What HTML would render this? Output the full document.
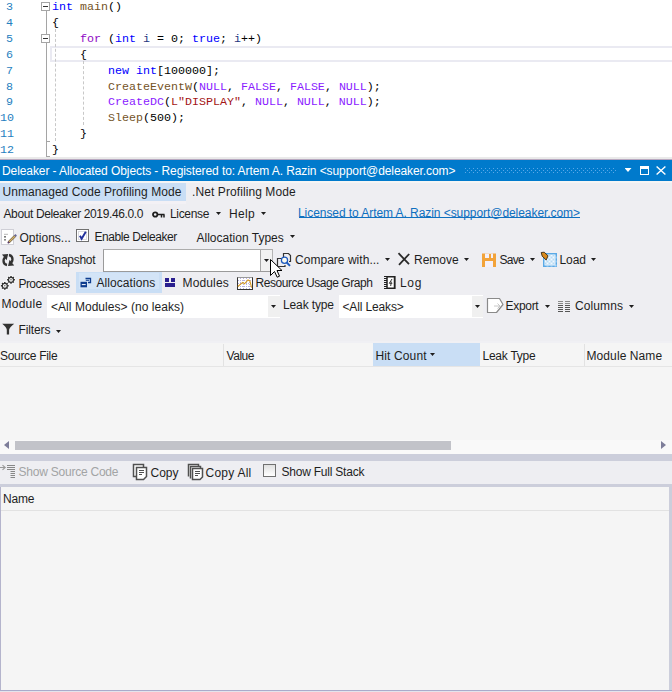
<!DOCTYPE html>
<html><head><meta charset="utf-8">
<style>
html,body{margin:0;padding:0;}
body{width:672px;height:692px;position:relative;overflow:hidden;background:#EEEEF2;font-family:"Liberation Sans",sans-serif;font-size:12px;color:#1E1E1E;}
.a{position:absolute;}
svg.a{overflow:visible;}
.t{position:absolute;white-space:pre;line-height:16px;height:16px;}
.code{position:absolute;left:0;top:0;width:672px;height:158px;background:#fff;overflow:hidden;}
.ln{position:absolute;left:0;width:13px;text-align:right;font-family:"Liberation Mono",monospace;font-size:11.67px;color:#2680C0;line-height:16px;white-space:pre;}
.cl{position:absolute;left:52px;font-family:"Liberation Mono",monospace;font-size:11.67px;letter-spacing:0px;line-height:16px;white-space:pre;color:#000;}
.kw{color:#0000FF}.fn{color:#74531F}.mc{color:#8A1BFF}.st{color:#A31515}.lv{color:#1F377F}.ct{color:#8F08C4}
.arr{position:absolute;width:5px;height:3px;background:#1E1E1E;clip-path:polygon(0 0,100% 0,50% 100%);}
</style></head><body>

<!-- code editor -->
<div class="code">
  <div class="a" style="left:50px;top:46px;width:630px;height:12px;border:2px solid #EAEAF2;"></div>
  <div class="ln" style="top:-1px">3</div>
  <div class="ln" style="top:15px">4</div>
  <div class="ln" style="top:31px">5</div>
  <div class="ln" style="top:47px">6</div>
  <div class="ln" style="top:63px">7</div>
  <div class="ln" style="top:79px">8</div>
  <div class="ln" style="top:94px">9</div>
  <div class="ln" style="top:110px">10</div>
  <div class="ln" style="top:126px">11</div>
  <div class="ln" style="top:142px">12</div>
  <!-- fold boxes -->
  <div class="a" style="left:41px;top:2px;width:7px;height:7px;border:1px solid #A5A5A5;background:#fff;"><div class="a" style="left:1px;top:3px;width:5px;height:1px;background:#333;"></div></div>
  <div class="a" style="left:41px;top:34px;width:7px;height:7px;border:1px solid #A5A5A5;background:#fff;"><div class="a" style="left:1px;top:3px;width:5px;height:1px;background:#333;"></div></div>
  <div class="a" style="left:46px;top:11px;width:1px;height:23px;background:#A5A5A5;"></div>
  <div class="a" style="left:46px;top:43px;width:1px;height:114px;background:#A5A5A5;"></div>
  <div class="a" style="left:46px;top:141px;width:4px;height:1px;background:#A5A5A5;"></div>
  <div class="a" style="left:46px;top:156px;width:4px;height:1px;background:#A5A5A5;"></div>
  <!-- indent guides -->
  <div class="a" style="left:55px;top:29px;width:0;height:112px;border-left:1px dashed #C8C8C8;"></div>
  <div class="a" style="left:83px;top:61px;width:0;height:64px;border-left:1px dashed #C8C8C8;"></div>

  <div class="cl" style="top:-1px"><span class="kw">int</span> <span class="fn">main</span>()</div>
  <div class="cl" style="top:15px">{</div>
  <div class="cl" style="top:31px">    <span class="ct">for</span> (<span class="kw">int</span> <span class="lv">i</span> = 0; <span class="kw">true</span>; <span class="lv">i</span>++)</div>
  <div class="cl" style="top:47px">    {</div>
  <div class="cl" style="top:63px">        <span class="kw">new</span> <span class="kw">int</span>[100000];</div>
  <div class="cl" style="top:79px">        <span class="fn">CreateEventW</span>(<span class="mc">NULL</span>, <span class="mc">FALSE</span>, <span class="mc">FALSE</span>, <span class="mc">NULL</span>);</div>
  <div class="cl" style="top:94px">        <span class="mc">CreateDC</span>(<span class="st">L"DISPLAY"</span>, <span class="mc">NULL</span>, <span class="mc">NULL</span>, <span class="mc">NULL</span>);</div>
  <div class="cl" style="top:110px">        <span class="fn">Sleep</span>(500);</div>
  <div class="cl" style="top:126px">    }</div>
  <div class="cl" style="top:142px">}</div>
</div>
<div class="a" style="left:0;top:157px;width:672px;height:2px;background:#EAEAEA;"></div>
<div class="a" style="left:0;top:159px;width:672px;height:1px;background:#B8A8C0;"></div>

<!-- title bar -->
<div class="a" style="left:0;top:160px;width:672px;height:21px;background:#007ACC;"></div>
<svg class="a" style="left:465px;top:168px" width="151" height="5"><defs><pattern id="gp" width="4" height="4" patternUnits="userSpaceOnUse"><rect x="0" y="0" width="1" height="1" fill="#5AA8E8"/><rect x="2" y="2" width="1" height="1" fill="#5AA8E8"/></pattern></defs><rect width="151" height="5" fill="url(#gp)"/></svg>
<div class="a" style="left:624.5px;top:168px;width:7px;height:4px;background:#fff;clip-path:polygon(0 0,100% 0,50% 100%);"></div>
<div class="a" style="left:640px;top:166px;width:7px;height:6px;border:1px solid #fff;border-top-width:3px;height:5px;"></div>
<svg class="a" style="left:656px;top:166px" width="10" height="10"><path d="M0.6 0.6L9.4 8.6M9.4 0.6L0.6 8.6" stroke="#fff" stroke-width="1.4"/></svg>

<div class="a" style="left:0;top:181px;width:672px;height:2px;background:#F5F5F5;"></div>
<!-- mode tabs -->
<div class="a" style="left:0;top:183px;width:186px;height:18px;background:#C9DEF5;"></div>
<div class="a" style="left:0;top:201px;width:186px;height:3px;background:#F3F1F5;"></div>

<!-- about row -->
<svg class="a" style="left:152px;top:210.5px" width="14" height="8"><circle cx="3.2" cy="3.5" r="2.2" fill="none" stroke="#1E1E1E" stroke-width="1.8"/><path d="M5.3 3.5H12.5M9.5 3.5V6.5M12 3.5V6.5" stroke="#1E1E1E" stroke-width="1.5"/></svg>
<div class="arr" style="left:216px;top:212px"></div>
<div class="arr" style="left:261px;top:212px"></div>
<div class="a" style="left:299px;top:217px;width:281px;height:1px;background:#0E70C0;"></div>

<!-- options row -->
<svg class="a" style="left:1px;top:229px" width="16" height="16"><rect x="0.5" y="0.5" width="12" height="15" fill="#fff" stroke="#CFCFD6"/><path d="M3 5.3H7" stroke="#B8B8B8" stroke-width="1"/><rect x="3" y="7" width="2" height="1.6" fill="#7A7A7A"/><rect x="3" y="10" width="2" height="1.6" fill="#8A8A8A"/><path d="M7.6 13.4L14.4 6.6" stroke="#7C6A50" stroke-width="2.6"/><path d="M7.8 13.2L14.2 6.8" stroke="#D8B868" stroke-width="1.2"/><path d="M6.8 14.2L8.2 12.8" stroke="#5A3A6A" stroke-width="1.6"/><path d="M13.8 7.2L15.2 5.8" stroke="#6A6A9A" stroke-width="2"/></svg>
<div class="a" style="left:76px;top:229px;width:11px;height:11px;border:1px solid #707070;background:#fff;"></div>
<svg class="a" style="left:76px;top:229px" width="13" height="13"><rect x="2.5" y="2.5" width="8" height="8" fill="none" stroke="#DADAE0" stroke-width="1"/><path d="M3.9 6.8L5.6 9.8L9.8 2.8" fill="none" stroke="#21309C" stroke-width="1.9"/></svg>
<div class="arr" style="left:290px;top:235px"></div>

<!-- snapshot row -->
<svg class="a" style="left:1px;top:253px" width="15" height="14"><path d="M5.8 3.6A4.3 4.3 0 0 0 6 12" fill="none" stroke="#333" stroke-width="2.3"/><path d="M1 1.6L7.2 1L5.6 7.2Z" fill="#333"/><path d="M8.2 10.4A4.3 4.3 0 0 0 8 2" fill="none" stroke="#333" stroke-width="2.3"/><path d="M13.2 12.4L7 13L8.6 6.8Z" fill="#333"/></svg>
<div class="a" style="left:103px;top:249px;width:168px;height:21px;border:1px solid #9A9A9A;border-top-color:#ACACAC;border-right-color:#B4B4B4;background:#fff;"></div>
<div class="a" style="left:260px;top:250px;width:11px;height:21px;background:#F2F2F2;border-left:1px solid #A8A8A8;"></div>
<div class="arr" style="left:264px;top:259px"></div>
<svg class="a" style="left:276px;top:252px" width="16" height="16"><path d="M7.5 5V1.5H12.5L14.5 3.5V9.5H13" fill="none" stroke="#333" stroke-width="1.2"/><path d="M6 6.5H1.5V14.5H9V13" fill="none" stroke="#333" stroke-width="1.2"/><circle cx="8.5" cy="8.3" r="3.1" fill="#FAFAF0" stroke="#1E5BBF" stroke-width="1.25"/><path d="M10.7 10.5L14 13.8" stroke="#1E5BBF" stroke-width="1.9"/></svg>
<svg class="a" style="left:269px;top:258px" width="14" height="20"><path d="M1.5 1.5V17.5L5.5 13.5L8.2 19.2L10.5 18.2L8 12.5H13Z" fill="#fff" stroke="#000" stroke-width="1" stroke-linejoin="miter"/></svg>
<div class="arr" style="left:385px;top:258px"></div>
<svg class="a" style="left:397px;top:252px" width="14" height="14"><path d="M1.5 1.2L12 12.2M12.2 2L2 12.8" stroke="#2A2A2A" stroke-width="1.8"/></svg>
<div class="arr" style="left:464px;top:258px"></div>
<svg class="a" style="left:481px;top:253px" width="16" height="15"><path d="M1 0.5H15V14H1Z" fill="#F2A33A"/><rect x="4" y="8" width="8" height="6" fill="#F4F0F8"/><rect x="4" y="0.5" width="8" height="4.5" fill="#F4F0F8"/><rect x="8" y="1" width="2" height="4" fill="#F2A33A"/></svg>
<div class="arr" style="left:530px;top:258px"></div>
<svg class="a" style="left:540px;top:251px" width="18" height="17"><rect x="3.75" y="2.75" width="12.5" height="12.5" fill="#F2F8FD" stroke="#5AA9E6" stroke-width="1.5"/><path d="M4.5 3.5h2v2h-2zM8.5 3.5h2v2h-2zM12.5 3.5h2v2h-2zM6.5 5.5h2v2h-2zM10.5 5.5h2v2h-2zM14.5 5.5h2v2h-2zM4.5 7.5h2v2h-2zM8.5 7.5h2v2h-2zM12.5 7.5h2v2h-2zM6.5 9.5h2v2h-2zM10.5 9.5h2v2h-2zM14.5 9.5h2v2h-2zM4.5 11.5h2v2h-2zM8.5 11.5h2v2h-2zM12.5 11.5h2v2h-2zM6.5 13.5h2v2h-2zM10.5 13.5h2v2h-2zM14.5 13.5h2v2h-2z" fill="#B5DAF5"/><path d="M1.2 1.5L4.2 1.2L8 4.8L6.2 9L2.2 5.2Z" fill="#D88A1E" stroke="#3A2A10" stroke-width="0.9" stroke-linejoin="round"/></svg>
<div class="arr" style="left:591px;top:258px"></div>

<!-- tabs row -->
<svg class="a" style="left:0px;top:275px" width="17" height="17"><circle cx="11" cy="4.8" r="4.6" fill="#fff" opacity="0.6"/><path d="M13.20 4.80L14.90 4.80M12.56 6.36L13.76 7.56M11.00 7.00L11.00 8.70M9.44 6.36L8.24 7.56M8.80 4.80L7.10 4.80M9.44 3.24L8.24 2.04M11.00 2.60L11.00 0.90M12.56 3.24L13.76 2.04" stroke="#333" stroke-width="1.5"/><circle cx="11" cy="4.8" r="2.5" fill="#fff" stroke="#333" stroke-width="1.2"/><circle cx="11" cy="4.8" r="0.8" fill="#666"/><circle cx="4.8" cy="10.8" r="4.6" fill="#fff" opacity="0.6"/><path d="M7.00 10.80L8.70 10.80M6.36 12.36L7.56 13.56M4.80 13.00L4.80 14.70M3.24 12.36L2.04 13.56M2.60 10.80L0.90 10.80M3.24 9.24L2.04 8.04M4.80 8.60L4.80 6.90M6.36 9.24L7.56 8.04" stroke="#333" stroke-width="1.5"/><circle cx="4.8" cy="10.8" r="2.5" fill="#fff" stroke="#333" stroke-width="1.2"/><circle cx="4.8" cy="10.8" r="0.8" fill="#666"/></svg>
<div class="a" style="left:76px;top:272px;width:86px;height:21px;background:#C9DEF5;"></div>
<div class="a" style="left:79px;top:273px;width:80px;height:16px;background:#D3E4F7;"></div>
<svg class="a" style="left:80px;top:277px" width="12" height="11"><path d="M5.5 1.5H10.5V5.5H8" fill="none" stroke="#0E3D8F" stroke-width="1.3"/><path d="M5.8 3.3H9.2" stroke="#0E3D8F" stroke-width="1"/><rect x="0.5" y="4.8" width="6.5" height="5.5" fill="#0E3D8F"/><path d="M1.8 7.6H5.7" stroke="#fff" stroke-width="1"/></svg>
<svg class="a" style="left:164px;top:277px" width="12" height="11"><rect x="1" y="1" width="4" height="4" fill="#2A1F8F"/><rect x="7" y="1" width="4" height="4" fill="#2A1F8F"/><rect x="1" y="6" width="10" height="4" fill="#2A1F8F"/></svg>
<svg class="a" style="left:237px;top:277px" width="16" height="13"><rect x="0.5" y="0.5" width="15" height="12" fill="#fff" stroke="#333"/><path d="M0.5 0.5H15.5" stroke="#999"/><path d="M3.5 1V12M6.5 1V12M9.5 1V12M12.5 1V12M1 3.5H15M1 6.5H15M1 9.5H15" stroke="#B8B0E0" stroke-width="1" stroke-dasharray="1 1"/><path d="M0.8 9.5L5.7 5.4L7.5 6.8L11 2.9L12.9 3.9L14.6 10.7" fill="none" stroke="#D89A20" stroke-width="1.1"/></svg>
<svg class="a" style="left:384px;top:276px" width="12" height="13"><path d="M0 0.5H3M0 2.5H3M0 4.5H3M0 6.5H3M0 8.5H3M0 10.5H3M0 12.5H3" stroke="#222" stroke-width="1"/><rect x="3" y="0.75" width="7.5" height="11.5" fill="#fff" stroke="#222" stroke-width="1.5"/><path d="M11 0V13" stroke="#222" stroke-width="1"/><path d="M8 3L5.3 7.3H8.3M7.3 5.6L6.7 10" fill="none" stroke="#333" stroke-width="1"/></svg>

<!-- module row -->
<div class="a" style="left:47px;top:295px;width:233px;height:23px;background:#fff;"></div>
<div class="a" style="left:268px;top:296px;width:12px;height:21px;background:#F0F0F0;"></div>
<div class="arr" style="left:271px;top:305px"></div>
<div class="a" style="left:339px;top:295px;width:144px;height:23px;background:#fff;"></div>
<div class="a" style="left:472px;top:296px;width:11px;height:21px;background:#F0F0F0;"></div>
<div class="arr" style="left:475px;top:305px"></div>
<svg class="a" style="left:486px;top:297px" width="18" height="17"><path d="M1.5 1.5H13.5L17 7.5L10.5 15.5H1.5Z" fill="#fff" stroke="#8A8A8A" stroke-width="1.2" stroke-linejoin="round"/><path d="M8 9H14M11.5 6.5L14 9L11.5 11.5" fill="none" stroke="#C8C8C8" stroke-width="1"/></svg>
<div class="arr" style="left:545px;top:305px"></div>
<svg class="a" style="left:557px;top:300px" width="14" height="13"><path d="M1 1.5H6M8 1.5H13M1 3.5H6M8 3.5H13" stroke="#8A8A8A" stroke-width="1"/><path d="M1 5.5H6M8 5.5H13M1 7.5H6M8 7.5H13M1 9.5H6M8 9.5H13M1 11.5H6M8 11.5H13" stroke="#555" stroke-width="1"/></svg>
<div class="arr" style="left:629px;top:305px"></div>

<!-- filters row -->
<svg class="a" style="left:2px;top:323px" width="13" height="13"><path d="M0.2 0.8H12.2Q7.6 4.2 7.1 6.8V11.6H4.8V6.8Q4.6 4.2 0.2 0.8Z" fill="#333"/></svg>
<div class="arr" style="left:56px;top:330px"></div>

<!-- grid -->
<div class="a" style="left:0;top:341px;width:672px;height:2px;background:#F0F0F4;"></div>
<div class="a" style="left:0;top:343px;width:672px;height:111px;background:#F5F5F5;"></div>
<div class="a" style="left:0;top:366px;width:672px;height:1px;background:#E5E5E5;"></div>
<div class="a" style="left:223px;top:344px;width:1px;height:22px;background:#E2E2E2;"></div>
<div class="a" style="left:373px;top:343px;width:107px;height:23px;background:#C9DEF5;"></div>
<div class="a" style="left:584px;top:344px;width:1px;height:22px;background:#E2E2E2;"></div>
<div class="arr" style="left:430px;top:353px"></div>

<!-- scrollbar -->
<div class="a" style="left:0;top:440px;width:672px;height:14px;background:#F9F9F9;"></div>
<div class="a" style="left:4px;top:441px;width:0;height:0;border-top:4.5px solid transparent;border-bottom:4.5px solid transparent;border-right:5px solid #7E7E9A;"></div>
<div class="a" style="left:15px;top:441px;width:436px;height:9px;background:#C2C3C9;"></div>
<div class="a" style="left:661px;top:441px;width:0;height:0;border-top:4.5px solid transparent;border-bottom:4.5px solid transparent;border-left:5px solid #7E7E9A;"></div>

<!-- splitter + bottom toolbar -->
<div class="a" style="left:0;top:454px;width:672px;height:7px;background:#CCCEDB;"></div>
<svg class="a" style="left:0px;top:464px" width="16" height="15"><path d="M0 3.5H5M2.5 1.2L5.2 3.5L2.5 5.8" fill="none" stroke="#999" stroke-width="1.1"/><path d="M7 1.5H15M7 3.5H15M7 5.5H15M10.5 7.5H15M10.5 9.5H15M10.5 11.5H15M10.5 13.5H15" stroke="#888" stroke-width="1"/></svg>
<svg class="a" style="left:132px;top:463px" width="17" height="18"><path d="M4 13.5H1.5V1.5H11.5V4.5" fill="#fff" stroke="#505050" stroke-width="1.5"/><path d="M4.5 4.5H14.5V13.5L11.5 16.5H4.5Z" fill="#fff" stroke="#505050" stroke-width="1.5"/><path d="M7 7.5H12M7 9.5H12M7 11.5H10" stroke="#505050" stroke-width="1.1"/></svg>
<svg class="a" style="left:187px;top:463px" width="17" height="18"><path d="M1.5 13.5V1.5H11.5V3" fill="#fff" stroke="#505050" stroke-width="1.5"/><path d="M3.5 15.5V3.5H13.5V5" fill="#fff" stroke="#505050" stroke-width="1.5"/><path d="M5.5 5.5H15.5V14L13 16.5H5.5Z" fill="#fff" stroke="#505050" stroke-width="1.5"/><path d="M8 8.5H13M8 10.5H13M8 12.5H11" stroke="#505050" stroke-width="1.1"/></svg>
<div class="a" style="left:263px;top:464px;width:11px;height:11px;border:1px solid #707070;background:linear-gradient(#E0E0E0,#fff);"></div>
<div class="a" style="left:0;top:484px;width:672px;height:3px;background:#CCCEDB;"></div>

<!-- bottom panel -->
<div class="a" style="left:1px;top:487px;width:668px;height:203px;background:#F5F5F5;"></div>
<div class="a" style="left:0;top:487px;width:1px;height:205px;background:#B4B4CC;"></div>
<div class="a" style="left:669px;top:487px;width:3px;height:205px;background:#CCCEDB;"></div>
<div class="a" style="left:0;top:690px;width:672px;height:1px;background:#ABABCB;"></div>
<div class="a" style="left:0;top:691px;width:672px;height:1px;background:#E4E4EC;"></div>
<div class="a" style="left:1px;top:510px;width:668px;height:1px;background:#E2E2E2;"></div>

<div class="t" style="left:2.0px;top:163px;letter-spacing:-0.084px;color:#fff">Deleaker - Allocated Objects - Registered to: Artem A. Razin &lt;support@deleaker.com&gt;</div>
<div class="t" style="left:2.5px;top:184px;letter-spacing:0.05px;">Unmanaged Code Profiling Mode</div>
<div class="t" style="left:192.0px;top:184px;letter-spacing:0.089px;">.Net Profiling Mode</div>
<div class="t" style="left:3.5px;top:206px;letter-spacing:-0.384px;">About Deleaker 2019.46.0.0</div>
<div class="t" style="left:170.0px;top:206px;letter-spacing:-0.333px;">License</div>
<div class="t" style="left:229.0px;top:206px;letter-spacing:0.333px;">Help</div>
<div class="t" style="left:298.0px;top:205px;letter-spacing:-0.062px;color:#0E70C0">Licensed to Artem A. Razin &lt;support@deleaker.com&gt;</div>
<div class="t" style="left:19.5px;top:230px;letter-spacing:0.0px;">Options...</div>
<div class="t" style="left:94.5px;top:229px;letter-spacing:-0.418px;">Enable Deleaker</div>
<div class="t" style="left:196.5px;top:230px;letter-spacing:0.007px;">Allocation Types</div>
<div class="t" style="left:19.5px;top:252px;letter-spacing:-0.275px;">Take Snapshot</div>
<div class="t" style="left:295.0px;top:252px;letter-spacing:0.029px;">Compare with...</div>
<div class="t" style="left:414.0px;top:252px;letter-spacing:0.0px;">Remove</div>
<div class="t" style="left:499.5px;top:252px;letter-spacing:-0.7px;">Save</div>
<div class="t" style="left:559.5px;top:252px;letter-spacing:-0.1px;">Load</div>
<div class="t" style="left:18.5px;top:276px;letter-spacing:-0.575px;">Processes</div>
<div class="t" style="left:96.5px;top:275px;letter-spacing:0.07px;">Allocations</div>
<div class="t" style="left:182.5px;top:275px;letter-spacing:0.15px;">Modules</div>
<div class="t" style="left:255.5px;top:275px;letter-spacing:-0.458px;">Resource Usage Graph</div>
<div class="t" style="left:400.0px;top:275px;letter-spacing:0.65px;">Log</div>
<div class="t" style="left:1.5px;top:296px;letter-spacing:0.26px;">Module</div>
<div class="t" style="left:51.0px;top:299px;letter-spacing:0.043px;">&lt;All Modules&gt; (no leaks)</div>
<div class="t" style="left:283.0px;top:297px;letter-spacing:-0.125px;">Leak type</div>
<div class="t" style="left:342.5px;top:299px;letter-spacing:-0.14px;">&lt;All Leaks&gt;</div>
<div class="t" style="left:505.5px;top:298px;letter-spacing:-0.3px;">Export</div>
<div class="t" style="left:575.0px;top:298px;letter-spacing:0.1px;">Columns</div>
<div class="t" style="left:18.5px;top:322px;letter-spacing:-0.117px;">Filters</div>
<div class="t" style="left:0.0px;top:348px;letter-spacing:-0.31px;">Source File</div>
<div class="t" style="left:226.5px;top:348px;letter-spacing:-0.45px;">Value</div>
<div class="t" style="left:375.5px;top:348px;letter-spacing:0.125px;">Hit Count</div>
<div class="t" style="left:482.5px;top:348px;letter-spacing:-0.25px;">Leak Type</div>
<div class="t" style="left:586.5px;top:348px;letter-spacing:0.09px;">Module Name</div>
<div class="t" style="left:18.5px;top:464px;letter-spacing:-0.227px;color:#A2A4A5">Show Source Code</div>
<div class="t" style="left:150.5px;top:465px;letter-spacing:0.017px;">Copy</div>
<div class="t" style="left:205.5px;top:465px;letter-spacing:0.243px;">Copy All</div>
<div class="t" style="left:281.5px;top:464px;letter-spacing:-0.221px;">Show Full Stack</div>
<div class="t" style="left:3.0px;top:491px;letter-spacing:-0.2px;">Name</div>

</body></html>
